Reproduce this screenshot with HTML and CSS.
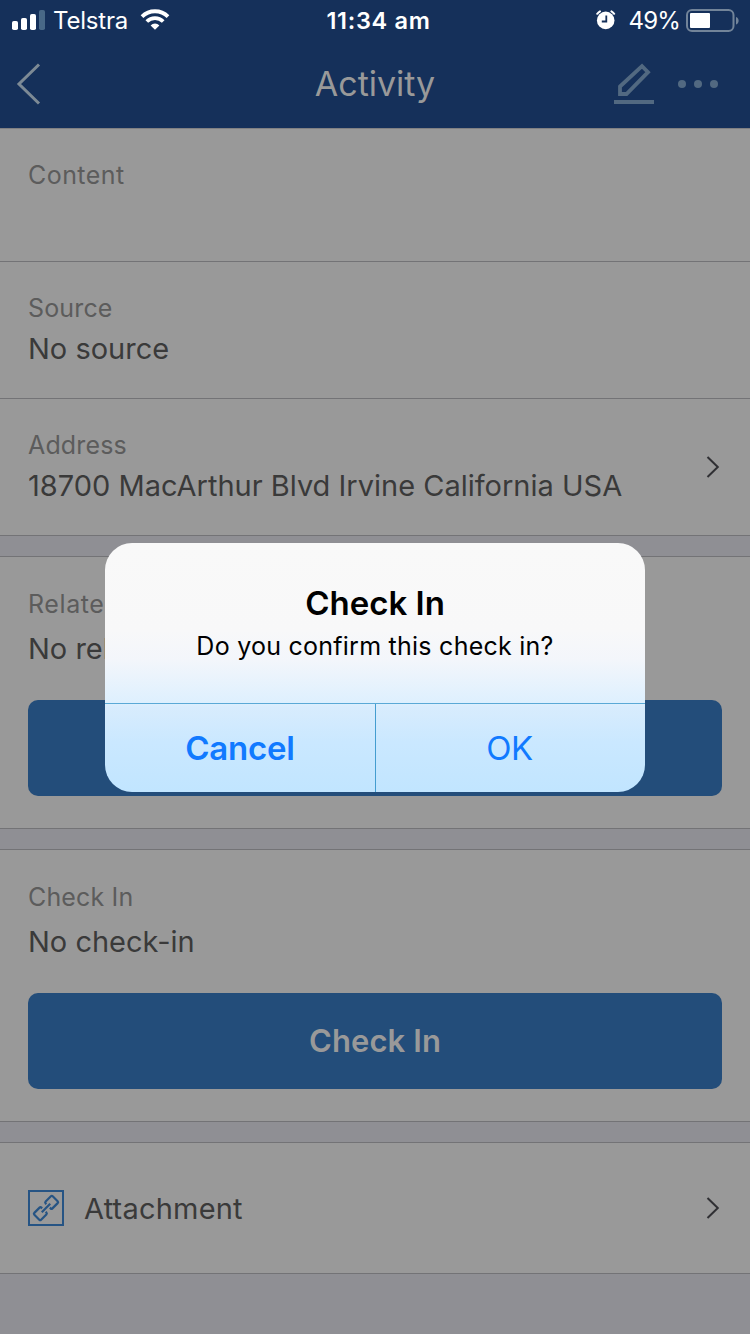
FILE: index.html
```html
<!DOCTYPE html>
<html lang="en">
<head>
    <meta charset="UTF-8">
    <meta name="viewport" content="width=device-width, initial-scale=1.0">
    <title>Activity</title>
    <link rel="stylesheet" href="styles.css">
</head>
<body>

    <header>
        <div class="status-bar">
            <div class="status-left">
                <svg class="signal" width="34" height="20" viewBox="0 0 34 20" fill="#fff">
                    <rect x="0" y="11" width="6" height="9" rx="1.8"/>
                    <rect x="9" y="8" width="6" height="12" rx="1.8"/>
                    <rect x="18" y="4" width="6" height="16" rx="1.8"/>
                    <rect x="27" y="0" width="6" height="20" rx="1.8" fill="#486887"/>
                </svg>
                <span class="carrier">Telstra</span>
                <svg class="wifi" width="30" height="22" viewBox="0 0 30 22" fill="none" stroke="#fff" stroke-width="3.8">
                    <path d="M2 7.6 A18.5 18.5 0 0 1 28 7.6"/>
                    <path d="M6.8 12.5 A11.8 11.8 0 0 1 23.2 12.5"/>
                    <path d="M10.6 16.4 A6.3 6.3 0 0 1 19.4 16.4 L15 20.8 Z" fill="#fff" stroke="none"/>
                </svg>
            </div>
            <div class="clock">11:34 am</div>
            <div class="status-right">
                <svg class="alarm" width="20" height="20" viewBox="0 0 20 20">
                    <circle cx="9.7" cy="10.4" r="8.8" fill="#fff"/>
                    <path d="M1.2 3.8 A11 11 0 0 1 4 1.4 M15.4 1.4 A11 11 0 0 1 18.2 3.8" fill="none" stroke="#fff" stroke-width="2" stroke-linecap="round"/>
                    <path d="M10.3 5.5 V11.5 H5.8" fill="none" stroke="#15305a" stroke-width="1.8"/>
                </svg>
                <span class="percent">49%</span>
                <svg class="battery" width="54" height="24" viewBox="0 0 54 24">
                    <rect x="1" y="2" width="46.5" height="21" rx="5" fill="none" stroke="#728499" stroke-width="2"/>
                    <rect x="4" y="5" width="20" height="15" rx="1" fill="#fff"/>
                    <path d="M50 9 C53.5 10 53.5 15.5 50 16.5 Z" fill="#728499"/>
                </svg>
            </div>
        </div>
        <nav class="nav-bar">
            <svg class="back" width="26" height="42" viewBox="0 0 26 42" fill="none" stroke="#7d8a95" stroke-width="3">
                <path d="M23 1.5 L3 21 L23 40.5"/>
            </svg>
            <h1>Activity</h1>
            <div class="nav-actions">
                <svg width="40" height="42" viewBox="0 0 40 42" fill="none" stroke="#526981">
                    <path d="M6 23.5 L28 3.2 L34 9.2 L12.5 31 H6 Z" stroke-width="3.8"/>
                    <path d="M0 39 H40" stroke-width="4"/>
                </svg>
                <svg class="dots" width="40" height="8" viewBox="0 0 40 8" fill="#526981">
                    <circle cx="4" cy="4" r="4"/>
                    <circle cx="20" cy="4" r="4"/>
                    <circle cx="36" cy="4" r="4"/>
                </svg>
            </div>
        </nav>
    </header>

    <main>
        <section class="row content">
            <div class="label">Content</div>
        </section>
        <section class="row">
            <div class="label">Source</div>
            <div class="value">No source</div>
        </section>
        <section class="row address">
            <div>
                <div class="label">Address</div>
                <div class="value">18700 MacArthur Blvd Irvine California USA</div>
            </div>
            <svg class="chevron" width="14" height="24" viewBox="0 0 14 24" fill="none" stroke="#303034" stroke-width="2">
                <path d="M1.5 2 L11.8 12 L1.5 22"/>
            </svg>
        </section>

        <section class="card">
            <div class="label related">Related</div>
            <div class="value">No related</div>
            <button class="action" aria-label="Add related"></button>
        </section>

        <section class="card">
            <div class="label">Check In</div>
            <div class="value">No check-in</div>
            <button class="action">Check In</button>
        </section>

        <section class="attachment">
            <svg class="link-icon" width="36" height="36" viewBox="0 0 36 36" fill="none" stroke="#265484">
                <rect x="1" y="1" width="34" height="34" stroke-width="2"/>
                <g transform="translate(18 18) rotate(-45)" stroke-width="2.2">
                    <path d="M-3 -2.5 V-3.5 Q-3 -4.8 -4.3 -4.8 H-11.7 Q-13 -4.8 -13 -3.5 V3.5 Q-13 4.8 -11.7 4.8 H-4.3 Q-3 4.8 -3 3.5 V2.5"/>
                    <path d="M3 -2.5 V-3.5 Q3 -4.8 4.3 -4.8 H11.7 Q13 -4.8 13 -3.5 V3.5 Q13 4.8 11.7 4.8 H4.3 Q3 4.8 3 3.5 V2.5"/>
                    <path d="M-6 0 H6"/>
                </g>
            </svg>
            <div class="value">Attachment</div>
            <svg class="chevron" width="14" height="24" viewBox="0 0 14 24" fill="none" stroke="#303034" stroke-width="2">
                <path d="M1.5 2 L11.8 12 L1.5 22"/>
            </svg>
        </section>
    </main>

    <div class="alert" role="alertdialog">
        <div class="alert-body">
            <h2>Check In</h2>
            <p>Do you confirm this check in?</p>
        </div>
        <div class="alert-buttons">
            <button class="cancel">Cancel</button>
            <button class="ok">OK</button>
        </div>
    </div>

</body>
</html>
```
FILE: styles.css
```css
* {
    box-sizing: border-box;
}
body {
    margin: 0;
    width: 750px;
    height: 1334px;
    overflow: hidden;
    position: relative;
    background-color: #8f8f94;
    font-family: Inter, "Liberation Sans", sans-serif;
    color: #3a3a3a;
}
h1, h2, p {
    margin: 0;
}
svg {
    display: block;
    flex: none;
}
button {
    border: none;
    padding: 0;
    font-family: inherit;
    background: none;
}

/* header */
header {
    height: 128px;
    background-color: #15305a;
}
.status-bar {
    display: grid;
    grid-template-columns: 1fr auto 1fr;
    align-items: center;
    height: 40px;
    color: #fff;
    font-size: 24px;
}
.status-left, .status-right {
    display: flex;
    align-items: center;
}
.status-left {
    padding-left: 12px;
}
.status-right {
    justify-content: flex-end;
    padding-right: 10px;
}
.carrier {
    margin-left: 7px;
    letter-spacing: -0.2px;
}
.wifi {
    margin-left: 12px;
}
.clock {
    padding-left: 7px;
    font-weight: 600;
    font-size: 23.5px;
    letter-spacing: 0.7px;
}
.percent {
    margin: 0 6px 0 12px;
    font-size: 24px;
    letter-spacing: -0.8px;
}
.nav-bar {
    display: grid;
    grid-template-columns: 1fr auto 1fr;
    align-items: center;
    height: 87px;
    padding: 0 32px 0 16px;
}
.nav-bar h1 {
    padding-left: 16px;
    font-size: 34px;
    font-weight: 400;
    color: #999;
}
.nav-actions {
    display: flex;
    justify-content: flex-end;
    align-items: center;
    gap: 24px;
}

/* detail rows */
.row {
    height: 137px;
    padding: 29px 28px 0;
    background-color: #999;
    border-bottom: 1px solid #737376;
}
.content {
    height: 134px;
    border-top: 1px solid #808083;
}
.content .label {
    letter-spacing: 0.45px;
}
.label {
    font-size: 25px;
    line-height: 34px;
    letter-spacing: 0.15px;
    color: #5c5c5c;
}
.related {
    letter-spacing: 0.6px;
}
.value {
    font-size: 29px;
    line-height: 40px;
    margin-top: 4px;
    white-space: nowrap;
}
.address {
    display: flex;
    justify-content: space-between;
}
.chevron {
    margin-right: 2px;
}
.address .chevron {
    margin-top: 27px;
}
.card {
    height: 273px;
    margin-top: 20px;
    padding: 30px 28px 0;
    background-color: #999;
    border-top: 1px solid #737376;
    border-bottom: 1px solid #737376;
}
.card .value {
    margin-top: 8px;
}
.action {
    display: block;
    width: 100%;
    height: 96px;
    margin-top: 31px;
    padding-bottom: 2px;
    border-radius: 10px;
    background-color: #234d7a;
    color: #999;
    font-size: 31px;
    font-weight: 600;
    letter-spacing: 0.1px;
}
.attachment {
    display: flex;
    align-items: center;
    height: 132px;
    margin-top: 20px;
    padding: 0 28px;
    background-color: #999;
    border-top: 1px solid #737376;
    border-bottom: 1px solid #737376;
}
.attachment .value {
    flex: 1;
    margin: 2px 0 0 20px;
    letter-spacing: 0.2px;
}

/* alert */
.alert {
    position: absolute;
    top: 543px;
    left: 105px;
    width: 540px;
    height: 249px;
    border-radius: 27px;
    overflow: hidden;
    background: linear-gradient(#f9f9f9 0, #f8f8f9 35%, #f3f6fb 47%, #def0fe 64%, #d8ecfd 66%, #cae8ff 80%, #c1e5ff 100%);
    color: #000;
    text-align: center;
}
.alert-body {
    height: 160px;
    padding-top: 40px;
}
.alert h2 {
    font-size: 33px;
    line-height: 40px;
    font-weight: 600;
}
.alert p {
    margin-top: 6px;
    font-size: 25px;
    line-height: 34px;
    letter-spacing: 0.25px;
}
.alert-buttons {
    display: grid;
    grid-template-columns: 1fr 1fr;
    height: 89px;
    border-top: 1px solid #5aa9d6;
}
.alert-buttons button {
    color: #117aff;
    font-size: 33px;
}
.alert-buttons .cancel {
    font-weight: 600;
    letter-spacing: -0.2px;
}
.alert-buttons .ok {
    padding-right: 2px;
    border-left: 1px solid #449dd0;
    letter-spacing: -0.5px;
}
```
